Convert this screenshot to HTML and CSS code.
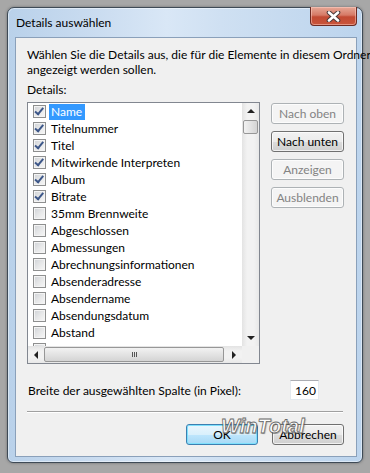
FILE: index.html
```html
<!DOCTYPE html>
<html lang="de">
<head>
    <meta charset="utf-8" />
    <link rel="stylesheet" href="styles.css">
</head>
<body>
    <div class="window">
        <div class="titlebar">
            <span class="title">Details auswählen</span>
            <div class="close">
                <svg width="15" height="11" viewBox="0 0 15 11">
                    <path d="M3 1.5 L12 9.5 M12 1.5 L3 9.5" stroke="#4a3a3a" stroke-width="4.6" stroke-linecap="round" />
                    <path d="M3 1.5 L12 9.5 M12 1.5 L3 9.5" stroke="#ffffff" stroke-width="2.6" stroke-linecap="round" />
                </svg>
            </div>
        </div>
        <div class="client">
            <p class="intro">Wählen Sie die Details aus, die für die Elemente in diesem Ordner<br>angezeigt werden sollen.</p>
            <div class="caption">Details:</div>
            <div class="details">
                <div class="listbox">
                    <div class="list-top">
                        <ul class="items">
                            <li><span class="cb checked"></span><span class="text selected">Name</span></li>
                            <li><span class="cb checked"></span><span class="text">Titelnummer</span></li>
                            <li><span class="cb checked"></span><span class="text">Titel</span></li>
                            <li><span class="cb checked"></span><span class="text">Mitwirkende Interpreten</span></li>
                            <li><span class="cb checked"></span><span class="text">Album</span></li>
                            <li><span class="cb checked"></span><span class="text">Bitrate</span></li>
                            <li><span class="cb"></span><span class="text">35mm Brennweite</span></li>
                            <li><span class="cb"></span><span class="text">Abgeschlossen</span></li>
                            <li><span class="cb"></span><span class="text">Abmessungen</span></li>
                            <li><span class="cb"></span><span class="text">Abrechnungsinformationen</span></li>
                            <li><span class="cb"></span><span class="text">Absenderadresse</span></li>
                            <li><span class="cb"></span><span class="text">Absendername</span></li>
                            <li><span class="cb"></span><span class="text">Absendungsdatum</span></li>
                            <li><span class="cb"></span><span class="text">Abstand</span></li>
                            <li><span class="cb"></span></li>
                        </ul>
                        <div class="vscroll">
                            <span class="arrow up"></span>
                            <span class="vthumb"></span>
                            <span class="vtrack"></span>
                            <span class="arrow down"></span>
                        </div>
                    </div>
                    <div class="list-bottom">
                        <div class="hscroll">
                            <span class="arrow left"></span>
                            <span class="hthumb"><span class="grip"></span></span>
                            <span class="arrow right"></span>
                        </div>
                        <div class="corner"></div>
                    </div>
                </div>
                <div class="side-buttons">
                    <button class="btn" disabled>Nach oben</button>
                    <button class="btn">Nach unten</button>
                    <button class="btn" disabled>Anzeigen</button>
                    <button class="btn" disabled>Ausblenden</button>
                </div>
            </div>
            <div class="width-row">
                <label for="col-width">Breite der ausgewählten Spalte (in Pixel):</label>
                <input id="col-width" class="width-input" type="text" value="160">
            </div>
            <div class="separator"></div>
            <div class="dialog-buttons">
                <button class="btn default">OK</button>
                <button class="btn">Abbrechen</button>
            </div>
            <div class="watermark">WinTotal</div>
        </div>
    </div>
</body>
</html>
```

FILE: styles.css
```css
body {
    margin: 0;
    width: 370px;
    height: 473px;
    overflow: hidden;
    background: #a7a7a7;
    font-family: "Segoe UI", Lato, sans-serif;
    font-size: 12px;
    color: #000;
}

.window {
    box-sizing: border-box;
    width: 356px;
    height: 456px;
    margin: 7px 0 0 7px;
    border: 1px solid #3e4a56;
    border-radius: 7px 7px 6px 6px;
    padding: 29px 5px 5px 7px;
    display: flex;
    flex-direction: column;
    background: linear-gradient(90deg, #b9d1ea 0%, #cadcf0 25%, #d9e7f6 45%, #cfe0f2 60%, #bcd4ed 100%);
    box-shadow: inset 0 0 0 1px rgba(255, 255, 255, 0.45), 0 0 3px rgba(0, 0, 0, 0.35);
}

.titlebar {
    display: flex;
    align-items: flex-start;
    justify-content: space-between;
    margin: -29px 0 0 0;
    height: 29px;
}

.title {
    margin: 7px 0 0 1px;
    color: #000;
    font-size: 12px;
}

.close {
    width: 47px;
    height: 19px;
    box-sizing: border-box;
    margin-top: -1px;
    display: flex;
    align-items: center;
    justify-content: center;
    border: 1px solid #6d2a22;
    border-top: none;
    border-radius: 0 0 4px 4px;
    background: linear-gradient(180deg, #e6a897 0%, #d67a66 45%, #c24a33 55%, #c9553b 100%);
    box-shadow: inset 0 0 0 1px rgba(255, 210, 200, 0.5);
}

.client {
    position: relative;
    flex: 1;
    border: 1px solid #8aa0ba;
    background: #f0f0f0;
    padding: 9px 12px 0 11px;
    display: flex;
    flex-direction: column;
}

.intro {
    margin: 0;
    line-height: 15px;
    white-space: nowrap;
}

.caption {
    margin-top: 5px;
    line-height: 15px;
}

.details {
    display: flex;
    gap: 11px;
    margin-top: 5px;
}

.listbox {
    width: 233px;
    height: 262px;
    box-sizing: border-box;
    border: 1px solid #828790;
    background: #fff;
    display: flex;
    flex-direction: column;
}

.list-top {
    display: flex;
    height: 243px;
    overflow: hidden;
}

.items {
    list-style: none;
    margin: 0;
    padding: 0;
    flex: 1;
    overflow: hidden;
}

.items li {
    height: 17px;
    display: flex;
    align-items: center;
    padding-left: 5px;
}

.cb {
    width: 13px;
    height: 13px;
    box-sizing: border-box;
    border: 1px solid #8e8f8f;
    background: linear-gradient(135deg, #cfd2d6 0%, #e6e7e8 50%, #f7f7f7 100%);
    box-shadow: inset 0 0 0 1px #f4f4f4;
    position: relative;
    flex: none;
}

.cb.checked::after {
    content: "";
    position: absolute;
    left: 2px;
    top: 0px;
    width: 3px;
    height: 7px;
    border: solid #3c5688;
    border-width: 0 2px 2px 0;
    transform: rotate(40deg);
    transform-origin: 60% 60%;
}

.text {
    margin-left: 3px;
    padding: 0 3px 0 2px;
    line-height: 16px;
    white-space: nowrap;
}

.text.selected {
    background: #3399ff;
    color: #fff;
}

.vscroll {
    width: 17px;
    display: flex;
    flex-direction: column;
    align-items: center;
    background: linear-gradient(90deg, #e3e3e3, #f2f2f2 30%, #f2f2f2 70%, #e8e8e8);
}

.vtrack {
    flex: 1;
}

.arrow {
    width: 0;
    height: 0;
    border: 4px solid transparent;
    flex: none;
}

.arrow.up {
    border-top: 0;
    border-bottom: 4px solid #222;
    margin: 6px 0 7px;
}

.arrow.down {
    border-bottom: 0;
    border-top: 4px solid #222;
    margin: 7px 0 6px;
}

.vthumb {
    width: 15px;
    height: 14px;
    box-sizing: border-box;
    border: 1px solid #979797;
    border-radius: 2px;
    background: linear-gradient(90deg, #f2f2f2 0%, #e3e3e3 50%, #d4d4d4 100%);
}

.list-bottom {
    display: flex;
    height: 17px;
}

.hscroll {
    flex: 1;
    display: flex;
    align-items: center;
    background: linear-gradient(180deg, #e3e3e3, #f2f2f2 30%, #f2f2f2 70%, #e8e8e8);
}

.arrow.left {
    border-left: 0;
    border-right: 4px solid #222;
    margin: 0 6px 0 6px;
}

.arrow.right {
    border-right: 0;
    border-left: 4px solid #222;
    margin: 0 6px 0 8px;
}

.hthumb {
    flex: 1;
    height: 15px;
    box-sizing: border-box;
    border: 1px solid #979797;
    border-radius: 2px;
    background: linear-gradient(180deg, #f2f2f2 0%, #e3e3e3 50%, #d4d4d4 100%);
    display: flex;
    align-items: center;
    justify-content: center;
}

.grip {
    width: 5px;
    height: 5px;
    background: repeating-linear-gradient(90deg, #555 0 1px, transparent 1px 2px);
}

.corner {
    width: 17px;
    background: #f0f0f0;
}

.side-buttons {
    display: flex;
    flex-direction: column;
    gap: 7px;
    margin-top: 1px;
}

.btn {
    width: 73px;
    height: 21px;
    box-sizing: border-box;
    border: 1px solid #707070;
    border-radius: 3px;
    padding: 0;
    font-family: inherit;
    font-size: 12px;
    color: #000;
    background: linear-gradient(180deg, #f2f2f2 0%, #ebebeb 50%, #dddddd 51%, #cfcfcf 100%);
    box-shadow: inset 0 0 0 1px rgba(255, 255, 255, 0.7);
}

.btn:disabled {
    border-color: #adb2b5;
    background: #f4f4f4;
    color: #838383;
}

.width-row {
    display: flex;
    align-items: center;
    margin-top: 16px;
    height: 20px;
}

.width-row label {
    margin-left: 1px;
}

.width-input {
    width: 29px;
    height: 20px;
    box-sizing: border-box;
    margin: 0 25px 0 auto;
    border: 1px solid #e3e9ef;
    border-top-color: #abadb3;
    padding: 0 0 0 4px;
    font-family: inherit;
    font-size: 12px;
    background: #fff;
    outline: none;
}

.separator {
    margin-top: 11px;
    height: 1px;
    margin-right: 1px;
    background: #a0a0a0;
    border-bottom: 1px solid #fff;
}

.dialog-buttons {
    display: flex;
    justify-content: flex-end;
    gap: 14px;
    margin-top: 11px;
}

.dialog-buttons .btn {
    width: 72px;
}

.btn.default {
    border-color: #3c7fb1;
    box-shadow: inset 0 0 0 1px #7ee0fc;
    background: linear-gradient(180deg, #eaf6fd 0%, #d9f0fc 50%, #bee6fd 51%, #a7d9f5 100%);
}

.watermark {
    position: absolute;
    left: 205px;
    top: 377px;
    font-family: "Liberation Sans", sans-serif;
    font-weight: bold;
    font-style: italic;
    font-size: 20px;
    color: #fff;
    -webkit-text-stroke: 0.8px #5a5a5a;
    text-shadow: 1px 1px 1px rgba(0, 0, 0, 0.35);
    opacity: 0.9;
}
```
